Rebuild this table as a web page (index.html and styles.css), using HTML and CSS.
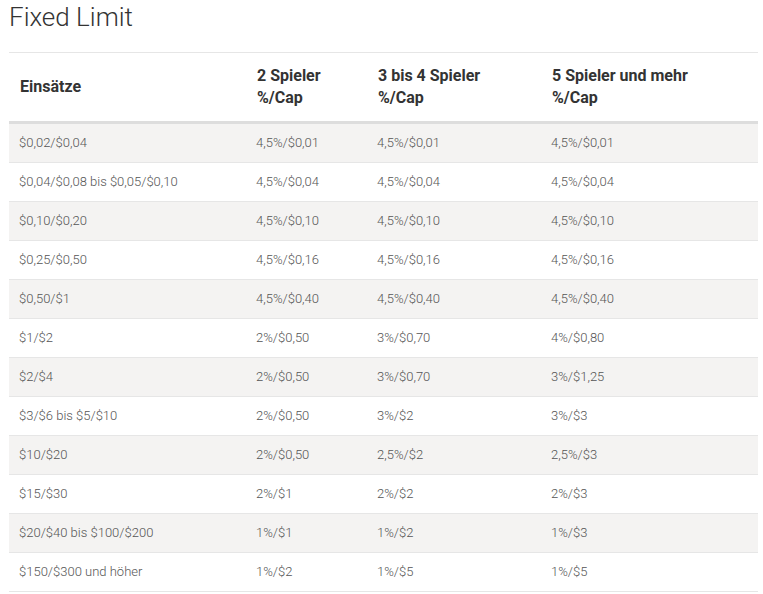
FILE: index.html
```html
<!DOCTYPE html>
<html lang="de">
<head>
<meta charset="utf-8">
<title>Fixed Limit</title>
<link rel="stylesheet" href="styles.css">
</head>
<body>
<div class="page">
  <h2 class="title">Fixed Limit</h2>
  <table class="rake">
    <colgroup>
      <col class="c1"><col class="c2"><col class="c3"><col class="c4">
    </colgroup>
    <thead>
      <tr>
        <th class="single">Einsätze</th>
        <th>2 Spieler<br>%/Cap</th>
        <th>3 bis 4 Spieler<br>%/Cap</th>
        <th>5 Spieler und mehr<br>%/Cap</th>
      </tr>
    </thead>
    <tbody>
      <tr><td>$0,02/$0,04</td><td>4,5%/$0,01</td><td>4,5%/$0,01</td><td>4,5%/$0,01</td></tr>
      <tr><td>$0,04/$0,08 bis $0,05/$0,10</td><td>4,5%/$0,04</td><td>4,5%/$0,04</td><td>4,5%/$0,04</td></tr>
      <tr><td>$0,10/$0,20</td><td>4,5%/$0,10</td><td>4,5%/$0,10</td><td>4,5%/$0,10</td></tr>
      <tr><td>$0,25/$0,50</td><td>4,5%/$0,16</td><td>4,5%/$0,16</td><td>4,5%/$0,16</td></tr>
      <tr><td>$0,50/$1</td><td>4,5%/$0,40</td><td>4,5%/$0,40</td><td>4,5%/$0,40</td></tr>
      <tr><td>$1/$2</td><td>2%/$0,50</td><td>3%/$0,70</td><td>4%/$0,80</td></tr>
      <tr><td>$2/$4</td><td>2%/$0,50</td><td>3%/$0,70</td><td>3%/$1,25</td></tr>
      <tr><td>$3/$6 bis $5/$10</td><td>2%/$0,50</td><td>3%/$2</td><td>3%/$3</td></tr>
      <tr><td>$10/$20</td><td>2%/$0,50</td><td>2,5%/$2</td><td>2,5%/$3</td></tr>
      <tr><td>$15/$30</td><td>2%/$1</td><td>2%/$2</td><td>2%/$3</td></tr>
      <tr><td>$20/$40 bis $100/$200</td><td>1%/$1</td><td>1%/$2</td><td>1%/$3</td></tr>
      <tr><td>$150/$300 und höher</td><td>1%/$2</td><td>1%/$5</td><td>1%/$5</td></tr>
    </tbody>
  </table>
</div>
</body>
</html>
```

FILE: styles.css
```css
html, body {
  margin: 0;
  padding: 0;
  background: #ffffff;
}

body {
  font-family: Roboto, "Noto Sans", Arial, sans-serif;
  color: #333333;
}

.page {
  padding: 0 5px 0 9px;
}

.title {
  margin: 0;
  padding-top: 2px;
  font-size: 26px;
  line-height: 30px;
  font-weight: 300;
  color: #333333;
  height: 50px;
}

.rake {
  width: 749px;
  border-collapse: collapse;
  border-top: 1px solid #e6e6e6;
  table-layout: fixed;
}

.c1 { width: 237px; }
.c2 { width: 121px; }
.c3 { width: 174px; }
.c4 { width: 217px; }

.rake th {
  text-align: left;
  vertical-align: middle;
  font-size: 16px;
  font-weight: 700;
  line-height: 22px;
  color: #333333;
  padding: 12px 10px 12px 11px;
  height: 44px;
  border-bottom: 3px solid #dddddd;
}

.rake td {
  font-size: 13px;
  font-weight: 300;
  line-height: 18px;
  color: #555555;
  padding: 10px 10px;
  border-bottom: 1px solid #e6e6e6;
  vertical-align: middle;
}

.rake tbody tr:nth-child(odd) td {
  background: #f4f3f2;
}
```
